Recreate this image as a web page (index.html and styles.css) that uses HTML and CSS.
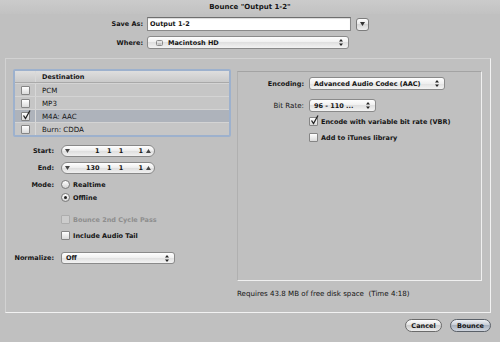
FILE: index.html
```html
<!DOCTYPE html>
<html lang="en">

<head>
    <meta charset="UTF-8">
    <meta name="viewport" content="width=device-width, initial-scale=1.0">
    <title>Bounce "Output 1-2"</title>
    <link rel="stylesheet" href="styles.css">
</head>

<body>
    <!-- title bar -->
    <div class="titlebar">Bounce "Output 1-2"</div>

    <!-- file name and location -->
    <div class="file-form">
        <div class="lbl">Save As:</div>
        <div class="field-row">
            <div class="textfield">Output 1-2</div>
            <div class="menu-btn">
                <svg width="5" height="4" viewBox="0 0 5 4"><path d="M0 0H5L2.5 4Z" fill="#333"/></svg>
            </div>
        </div>
        <div class="lbl">Where:</div>
        <div class="popup where">
            <span class="popup-text">
                <svg class="disk" width="7" height="6" viewBox="0 0 7 6"><rect x="0.5" y="0.5" width="6" height="5" rx="1" fill="#e4e4e4" stroke="#8c8c8c"/><line x1="1.5" y1="4" x2="5.5" y2="4" stroke="#aaa"/></svg>
                Macintosh HD
            </span>
            <svg width="4" height="7" viewBox="0 0 4 7"><path d="M2 0L4 2.5H0Z M2 7L4 4.5H0Z" fill="#222"/></svg>
        </div>
    </div>

    <!-- main group -->
    <div class="group">
        <div class="left-col">
            <div class="dest-table">
                <div class="dest-row head">
                    <span class="cell-check"></span>
                    <span class="cell-name">Destination</span>
                </div>
                <div class="dest-row">
                    <span class="cell-check"><span class="cb"></span></span>
                    <span class="cell-name">PCM</span>
                </div>
                <div class="dest-row">
                    <span class="cell-check"><span class="cb"></span></span>
                    <span class="cell-name">MP3</span>
                </div>
                <div class="dest-row selected">
                    <span class="cell-check"><span class="cb checked"><svg width="9" height="10" viewBox="0 0 9 10"><path d="M1.5 5.5L3.5 8.5L8 0.5" fill="none" stroke="#222" stroke-width="1.3"/></svg></span></span>
                    <span class="cell-name">M4A: AAC</span>
                </div>
                <div class="dest-row">
                    <span class="cell-check"><span class="cb"></span></span>
                    <span class="cell-name">Burn: CDDA</span>
                </div>
            </div>

            <div class="range-form">
                <div class="frow start-row">
                    <div class="lbl">Start:</div>
                    <div class="stepper">
                        <svg width="5" height="4" viewBox="0 0 5 4"><path d="M0 0H5L2.5 4Z" fill="#444"/></svg>
                        <span class="c1">1</span><span class="c2">1</span><span class="c3">1</span><span class="c4">1</span>
                        <svg class="up" width="5" height="4" viewBox="0 0 5 4"><path d="M0 4H5L2.5 0Z" fill="#444"/></svg>
                    </div>
                </div>
                <div class="frow end-row">
                    <div class="lbl">End:</div>
                    <div class="stepper">
                        <svg width="5" height="4" viewBox="0 0 5 4"><path d="M0 0H5L2.5 4Z" fill="#444"/></svg>
                        <span class="c1">130</span><span class="c2">1</span><span class="c3">1</span><span class="c4">1</span>
                        <svg class="up" width="5" height="4" viewBox="0 0 5 4"><path d="M0 4H5L2.5 0Z" fill="#444"/></svg>
                    </div>
                </div>
                <div class="frow mode-row">
                    <div class="lbl">Mode:</div>
                    <div class="opt"><span class="radio"></span>Realtime</div>
                </div>
                <div class="frow offline-row">
                    <div class="lbl"></div>
                    <div class="opt"><span class="radio on"><span class="dot"></span></span>Offline</div>
                </div>
                <div class="frow cycle-row">
                    <div class="lbl"></div>
                    <div class="opt disabled"><span class="cb"></span>Bounce 2nd Cycle Pass</div>
                </div>
                <div class="frow tail-row">
                    <div class="lbl"></div>
                    <div class="opt"><span class="cb"></span>Include Audio Tail</div>
                </div>
                <div class="frow norm-row">
                    <div class="lbl">Normalize:</div>
                    <div class="popup normalize">
                        <span class="popup-text">Off</span>
                        <svg width="4" height="7" viewBox="0 0 4 7"><path d="M2 0L4 2.5H0Z M2 7L4 4.5H0Z" fill="#222"/></svg>
                    </div>
                </div>
            </div>
        </div>

        <div class="right-col">
            <div class="enc-box">
                <div class="erow">
                    <div class="elbl bold">Encoding:</div>
                    <div class="popup encoding">
                        <span class="popup-text">Advanced Audio Codec (AAC)</span>
                        <svg width="4" height="7" viewBox="0 0 4 7"><path d="M2 0L4 2.5H0Z M2 7L4 4.5H0Z" fill="#222"/></svg>
                    </div>
                </div>
                <div class="erow bitrate-row">
                    <div class="elbl">Bit Rate:</div>
                    <div class="popup bitrate">
                        <span class="popup-text">96 - 110 ...</span>
                        <svg width="4" height="7" viewBox="0 0 4 7"><path d="M2 0L4 2.5H0Z M2 7L4 4.5H0Z" fill="#222"/></svg>
                    </div>
                </div>
                <div class="erow vbr-row">
                    <div class="elbl"></div>
                    <div class="opt"><span class="cb checked"><svg width="9" height="10" viewBox="0 0 9 10"><path d="M1.5 5.5L3.5 8.5L8 0.5" fill="none" stroke="#222" stroke-width="1.3"/></svg></span>Encode with variable bit rate (VBR)</div>
                </div>
                <div class="erow itunes-row">
                    <div class="elbl"></div>
                    <div class="opt"><span class="cb"></span>Add to iTunes library</div>
                </div>
            </div>
            <p class="req">Requires 43.8 MB of free disk space&nbsp; (Time 4:18)</p>
        </div>
    </div>

    <!-- dialog buttons -->
    <div class="buttons">
        <button class="btn cancel">Cancel</button>
        <button class="btn default">Bounce</button>
    </div>
</body>

</html>
```

FILE: styles.css
```css
/* base */
* {
    box-sizing: border-box;
}

body {
    margin: 0;
    width: 500px;
    height: 342px;
    overflow: hidden;
    background: #c0c0c0;
    font-family: "DejaVu Sans", "Liberation Sans", sans-serif;
    font-size: 7.1px;
    color: #151515;
}

.titlebar {
    height: 14px;
    display: flex;
    align-items: center;
    justify-content: center;
    font-weight: bold;
    font-size: 7px;
    background: linear-gradient(#cbcbcb, #c2c2c2);
}

.lbl {
    display: flex;
    justify-content: flex-end;
    align-items: center;
    white-space: nowrap;
    font-weight: bold;
    font-size: 6.5px;
}

/* save as / where */
.file-form {
    display: grid;
    grid-template-columns: 143px auto;
    column-gap: 4px;
    row-gap: 5px;
    margin-top: 3px;
    align-items: center;
}

.field-row {
    display: flex;
    align-items: center;
    gap: 5px;
}

.textfield {
    width: 204px;
    height: 14px;
    border: 1px solid #8a8a8a;
    border-top-color: #6e6e6e;
    background: #fff;
    box-shadow: inset 0 1px 1px rgba(0, 0, 0, 0.15);
    padding-left: 2px;
    font-weight: bold;
    font-size: 6.5px;
    display: flex;
    align-items: center;
}

.menu-btn {
    width: 13px;
    height: 13px;
    border: 1px solid #7c7c7c;
    border-radius: 3px;
    background: linear-gradient(#ffffff, #e6e6e6 50%, #d6d6d6 50%, #efefef);
    display: flex;
    align-items: center;
    justify-content: center;
}

.popup {
    height: 13px;
    border: 1px solid #8a8a8a;
    border-radius: 3px;
    background: linear-gradient(#fefefe, #efefef 50%, #e0e0e0 50%, #f3f3f3);
    display: flex;
    align-items: center;
    justify-content: space-between;
    padding: 0 5px 0 4px;
    font-weight: bold;
    font-size: 6.5px;
    white-space: nowrap;
}

.popup-text {
    display: flex;
    align-items: center;
}

.where {
    width: 202px;
    padding-left: 8px;
}

.disk {
    margin-right: 5px;
}

/* main group box */
.group {
    margin: 9px 0 0 5px;
    width: 486px;
    height: 255px;
    border: 1px solid #f2f2f2;
    border-top-color: #d2d2d2;
    border-left-color: #d2d2d2;
    display: flex;
    padding: 10px 0 0 7px;
}

.left-col {
    width: 218px;
}

.dest-table {
    height: 68px;
    border: 2px solid #9db1cd;
    border-radius: 2px;
    background: #c6c6c6;
}

.dest-row {
    display: flex;
    height: 13px;
    border-top: 1px solid #d4d4d4;
}

.dest-row.head {
    height: 12px;
    border-top: none;
    background: linear-gradient(#dedede, #cacaca);
    border-bottom: 1px solid #a9a9a9;
    font-weight: bold;
    font-size: 6.5px;
}

.dest-row.selected {
    background: #aeb3bb;
}

.cell-check {
    width: 21px;
    border-right: 1px solid #d8d8d8;
    display: flex;
    align-items: center;
    justify-content: center;
}

.cell-name {
    padding-left: 6px;
    display: flex;
    align-items: center;
}

/* checkbox / radio */
.cb {
    width: 9px;
    height: 9px;
    border: 1px solid #858585;
    border-radius: 1px;
    background: linear-gradient(#ffffff, #dadada);
    position: relative;
    flex-shrink: 0;
}

.cb.checked svg {
    position: absolute;
    left: 0;
    top: -3px;
}

.radio {
    width: 9px;
    height: 9px;
    border: 1px solid #7a7a7a;
    border-radius: 50%;
    background: linear-gradient(#ffffff, #d4d4d4);
    display: flex;
    align-items: center;
    justify-content: center;
    flex-shrink: 0;
}

.dot {
    width: 3px;
    height: 3px;
    border-radius: 50%;
    background: #222;
}

.opt {
    display: flex;
    align-items: center;
    gap: 3px;
    font-weight: bold;
    font-size: 6.5px;
    white-space: nowrap;
}

.opt.disabled {
    color: #8e8e8e;
}

.opt.disabled .cb {
    border-color: #adadad;
    background: #cccccc;
}

/* start / end / mode */
.range-form {
    margin-top: 8px;
}

.frow {
    display: flex;
    align-items: center;
    gap: 7px;
}

.frow .lbl {
    width: 41px;
    flex-shrink: 0;
}

.end-row {
    margin-top: 5px;
}

.mode-row {
    margin-top: 6px;
}

.offline-row {
    margin-top: 4px;
}

.cycle-row {
    margin-top: 13px;
}

.tail-row {
    margin-top: 7px;
}

.norm-row {
    margin-top: 12px;
}

.stepper {
    width: 94px;
    height: 12px;
    border: 1px solid #888;
    border-radius: 6px;
    background: linear-gradient(#ffffff, #ececec 50%, #dedede 50%, #f0f0f0);
    display: flex;
    align-items: center;
    padding: 0 3px;
    font-weight: bold;
    font-size: 6.5px;
}

.stepper span {
    text-align: right;
}

.c1 {
    width: 30px;
}

.c2,
.c3 {
    width: 12px;
}

.c4 {
    width: 20px;
}

.stepper .up {
    margin-left: 3px;
}

.normalize {
    width: 114px;
    height: 12px;
}

/* encoding box */
.right-col {
    margin: 2px 0 0 6px;
    width: 245px;
}

.enc-box {
    height: 210px;
    border: 1px solid #f0f0f0;
    border-top-color: #a3a3a3;
    border-left-color: #b0b0b0;
    padding-top: 5px;
}

.erow {
    display: flex;
    align-items: center;
    gap: 5px;
}

.elbl {
    width: 66px;
    text-align: right;
    flex-shrink: 0;
}

.elbl.bold {
    font-weight: bold;
    font-size: 6.5px;
}

.encoding {
    width: 136px;
}

.bitrate-row {
    margin-top: 9px;
}

.bitrate {
    width: 67px;
}

.vbr-row {
    margin-top: 5px;
}

.itunes-row {
    margin-top: 7px;
}

.req {
    margin: 8px 0 0;
    line-height: 9px;
}

/* buttons */
.buttons {
    display: flex;
    justify-content: flex-end;
    gap: 8px;
    padding-right: 9px;
    margin-top: 6px;
}

.btn {
    height: 13px;
    padding: 0;
    border: 1px solid #6a6a6a;
    border-radius: 7px;
    background: linear-gradient(#fdfdfd, #e2e2e2 50%, #cdcdcd 50%, #ececec);
    font-family: inherit;
    font-size: 6.5px;
    font-weight: bold;
    color: #151515;
}

.cancel {
    width: 37px;
}

.default {
    width: 41px;
    border-color: #5a6068;
    background: linear-gradient(#eef1f5, #c2c9d3 50%, #a9b2bf 50%, #cfd5de);
}
```
